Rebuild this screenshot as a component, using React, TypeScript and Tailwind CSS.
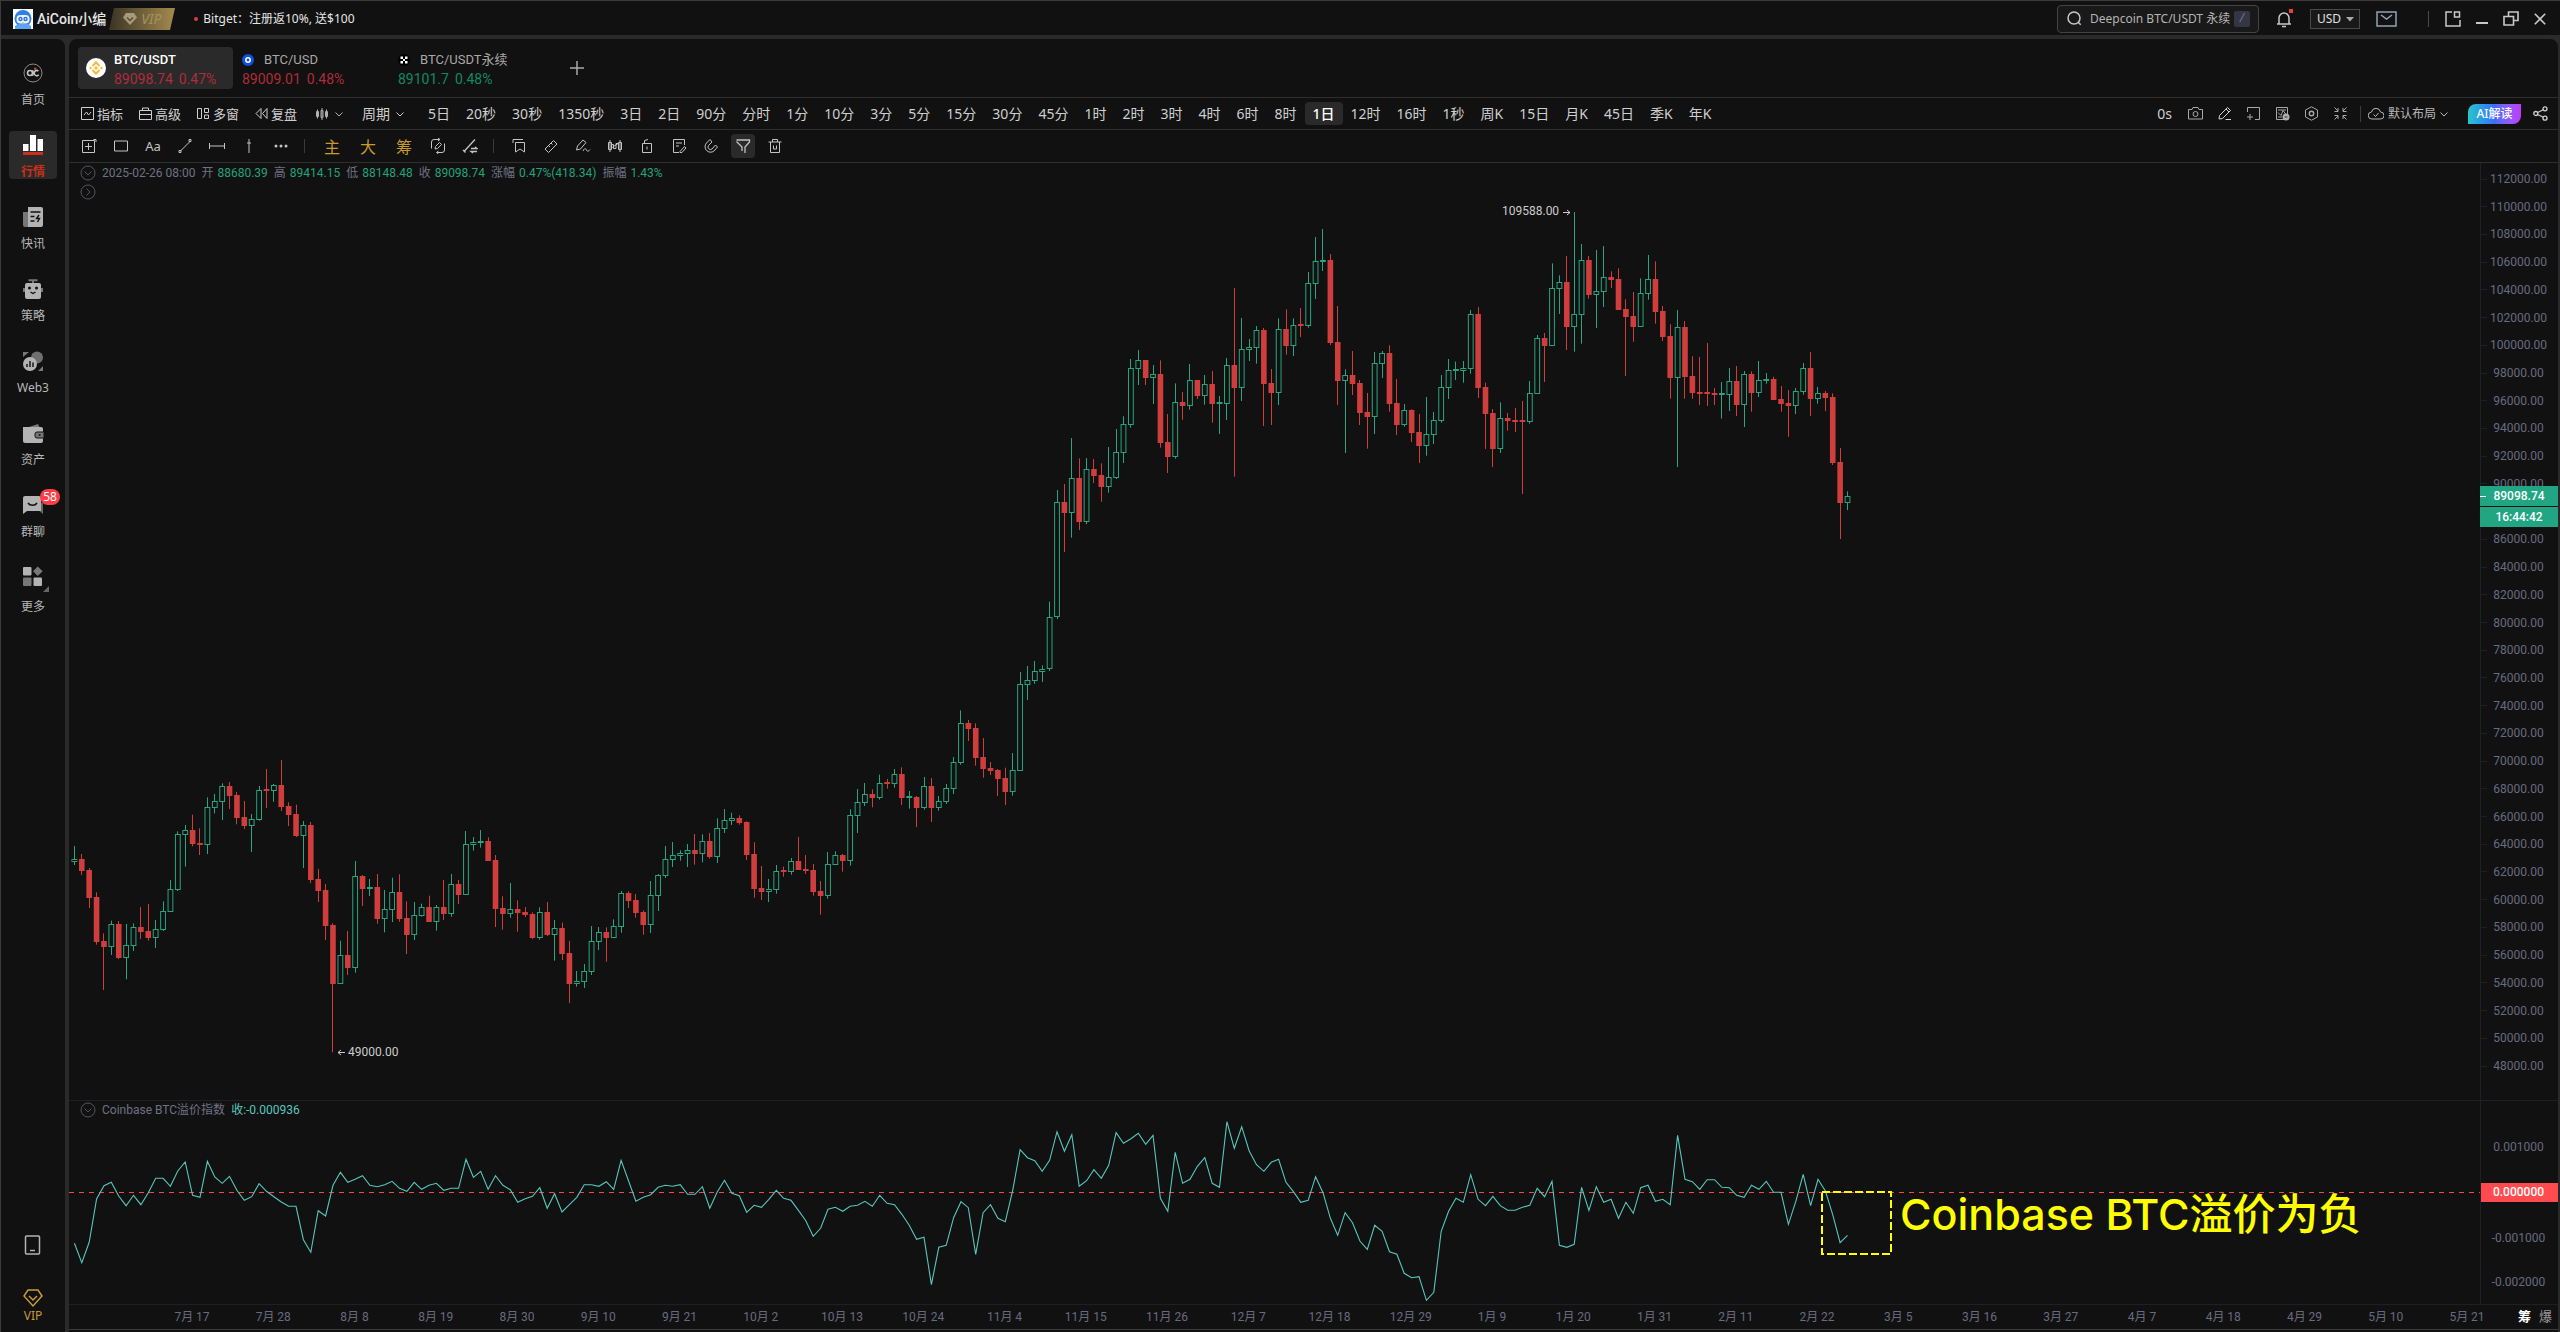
import type { ReactNode } from 'react'

const UI_FONT = "font-['Noto_Sans','Noto_Sans_CJK_SC',sans-serif]"
const NUM_FONT = "font-['Roboto','Noto_Sans_CJK_SC',sans-serif]"

// One bar: [1 up / 0 down, high, body top, body bottom, low].
// Values are y positions in thirds of a pixel, counted from the block's base (in pixels).
type Bar = [number, number, number, number, number]

const BLOCKS: { base: number; bars: Bar[] }[] = [
  {
    base: 567,
    bars: [
      [1, 348, 387, 396, 405], [0, 372, 387, 423, 435], [0, 414, 420, 504, 534], [0, 487, 501, 636, 644],
      [0, 610, 633, 651, 780], [1, 572, 582, 651, 675], [0, 573, 582, 684, 687], [1, 582, 645, 684, 748],
      [1, 580, 591, 648, 663], [0, 531, 591, 606, 627], [0, 522, 603, 624, 632], [1, 570, 597, 624, 654],
      [1, 514, 543, 600, 603], [1, 450, 477, 546, 546], [1, 304, 312, 480, 483], [1, 285, 300, 315, 410],
      [0, 254, 300, 342, 349], [0, 295, 339, 345, 375], [1, 202, 231, 345, 372], [1, 192, 213, 234, 250],
      [1, 160, 168, 216, 270], [0, 156, 168, 198, 237], [0, 186, 195, 264, 283], [0, 213, 261, 288, 297],
      [1, 252, 267, 288, 366], [1, 168, 180, 270, 272], [0, 117, 177, 183, 234], [1, 162, 165, 183, 215],
      [0, 90, 165, 231, 243], [0, 217, 228, 255, 288], [0, 224, 252, 318, 321], [1, 273, 285, 318, 414],
      [0, 276, 285, 450, 459], [0, 417, 447, 483, 516], [0, 462, 480, 588, 630], [0, 580, 585, 762, 967],
      [1, 632, 675, 762, 762], [0, 603, 675, 714, 735], [1, 393, 438, 714, 728], [0, 435, 438, 477, 528],
      [1, 447, 471, 477, 498], [0, 432, 471, 567, 581], [1, 480, 537, 567, 607], [1, 443, 486, 540, 576],
      [0, 433, 486, 567, 575], [0, 514, 564, 615, 672], [1, 516, 555, 615, 630], [1, 521, 531, 558, 560],
      [0, 497, 531, 576, 576], [1, 525, 531, 576, 602], [0, 450, 531, 552, 570], [1, 432, 462, 552, 560],
      [0, 450, 462, 495, 522], [1, 303, 342, 495, 495], [1, 321, 336, 345, 362], [1, 300, 333, 338, 353],
      [0, 322, 333, 393, 393], [0, 375, 390, 537, 591], [0, 499, 534, 552, 599], [1, 459, 537, 552, 563],
      [0, 511, 537, 549, 605], [0, 531, 546, 555, 561], [0, 547, 552, 624, 627], [1, 532, 546, 624, 629],
      [0, 516, 546, 615, 618], [1, 570, 594, 615, 692], [0, 578, 594, 672, 690], [0, 633, 669, 762, 819],
      [1, 723, 753, 762, 770], [1, 702, 723, 756, 774], [1, 588, 633, 726, 735], [1, 591, 606, 636, 660],
      [0, 592, 606, 624, 695], [1, 568, 588, 624, 624], [1, 483, 489, 591, 608], [0, 484, 489, 513, 534],
      [0, 492, 510, 549, 563], [0, 541, 546, 585, 614], [1, 453, 495, 585, 609], [1, 432, 435, 498, 543],
      [1, 348, 387, 438, 444], [1, 336, 375, 390, 411], [1, 361, 369, 378, 392], [1, 342, 360, 372, 411],
      [0, 312, 360, 372, 404], [1, 313, 333, 372, 397], [0, 309, 333, 381, 386], [1, 265, 294, 381, 399],
      [1, 237, 270, 297, 309], [1, 248, 264, 273, 285],
    ],
  },
  {
    base: 507,
    bars: [
      [0, 436, 444, 459, 464], [0, 454, 456, 555, 570], [0, 517, 552, 657, 683], [0, 588, 654, 666, 690],
      [1, 627, 657, 666, 696], [1, 585, 603, 660, 671], [0, 590, 600, 606, 620], [1, 564, 573, 606, 614],
      [0, 501, 573, 600, 600], [0, 555, 597, 603, 612], [0, 582, 600, 666, 677], [0, 633, 663, 678, 734],
      [1, 546, 582, 678, 686], [1, 544, 555, 585, 585], [0, 552, 555, 573, 605], [1, 418, 435, 573, 587],
      [1, 357, 396, 438, 489], [1, 339, 372, 399, 408], [0, 358, 372, 384, 412], [1, 314, 339, 384, 389],
      [0, 327, 336, 342, 356], [1, 297, 312, 342, 353], [0, 292, 312, 384, 405], [1, 363, 378, 384, 416],
      [0, 378, 381, 414, 471], [1, 321, 348, 414, 419], [0, 324, 348, 414, 456], [1, 378, 393, 414, 422],
      [1, 342, 354, 396, 402], [1, 261, 276, 357, 372], [1, 121, 159, 279, 284], [0, 150, 159, 177, 213],
      [0, 160, 174, 264, 287], [0, 204, 261, 297, 323], [0, 276, 294, 303, 315], [0, 297, 300, 327, 378],
      [0, 293, 324, 366, 405], [1, 249, 300, 366, 377], [1, 6, 42, 303, 303], [1, -12, 30, 45, 90],
      [1, -27, 3, 33, 41], [1, -14, -3, 6, 36], [1, -205, -158, -4, 3],
    ],
  },
  {
    base: 17,
    bars: [
      [1, 930, 966, 1312, 1317], [0, 912, 966, 999, 1116], [1, 774, 894, 999, 1073], [0, 835, 894, 1026, 1050],
      [1, 834, 867, 1026, 1032], [0, 837, 867, 888, 909], [0, 850, 885, 921, 965], [1, 801, 891, 921, 938],
      [1, 747, 816, 894, 897], [1, 709, 732, 819, 849], [1, 537, 564, 735, 743], [1, 510, 540, 567, 615],
      [0, 540, 540, 594, 615], [1, 555, 582, 594, 672], [0, 541, 582, 789, 803], [0, 702, 786, 831, 879],
      [1, 610, 666, 831, 836], [0, 636, 666, 678, 719], [1, 552, 600, 678, 689], [0, 600, 600, 648, 657],
      [1, 585, 612, 648, 674], [0, 573, 612, 672, 728], [1, 648, 666, 672, 762], [1, 534, 555, 672, 720],
      [0, 324, 555, 624, 890], [1, 414, 507, 624, 663], [1, 477, 501, 510, 543], [1, 438, 450, 504, 551],
      [0, 444, 450, 612, 738], [0, 567, 609, 639, 735], [1, 415, 447, 639, 675], [0, 388, 447, 498, 524],
      [1, 415, 435, 498, 528], [0, 384, 432, 438, 471], [1, 276, 309, 438, 443], [1, 171, 243, 312, 357],
      [1, 147, 240, 246, 273], [0, 222, 240, 489, 495], [0, 378, 486, 603, 675], [1, 568, 585, 603, 819],
      [0, 513, 585, 612, 645], [0, 600, 609, 699, 735], [0, 639, 696, 711, 806], [1, 516, 549, 711, 762],
      [1, 513, 519, 552, 594], [0, 496, 519, 672, 695], [0, 597, 669, 735, 765], [1, 672, 690, 735, 740],
      [0, 688, 690, 759, 786], [0, 702, 756, 798, 849], [1, 651, 762, 798, 827], [1, 696, 720, 765, 792],
      [1, 585, 621, 723, 728], [1, 537, 570, 624, 657], [1, 545, 567, 573, 600], [1, 543, 564, 573, 608],
      [1, 390, 402, 567, 581], [0, 381, 402, 624, 654], [0, 608, 621, 702, 807], [0, 687, 699, 807, 861],
      [1, 667, 714, 807, 819], [0, 699, 714, 723, 752], [0, 684, 720, 726, 756], [0, 663, 720, 726, 942],
      [1, 603, 639, 726, 731], [1, 465, 474, 642, 642], [0, 459, 474, 498, 606], [1, 250, 324, 498, 498],
      [1, 286, 306, 327, 402], [0, 228, 306, 441, 510], [1, 96, 402, 441, 515], [1, 192, 240, 405, 491],
      [0, 228, 240, 345, 356], [1, 210, 333, 345, 444], [1, 198, 291, 336, 381], [0, 274, 291, 300, 324],
      [0, 265, 297, 390, 390], [0, 358, 387, 411, 588], [0, 336, 408, 441, 485], [1, 295, 339, 441, 441],
      [1, 225, 297, 342, 359], [0, 244, 297, 396, 431], [0, 378, 393, 471, 483], [0, 433, 468, 594, 656],
      [1, 390, 441, 594, 861], [0, 423, 441, 591, 656], [0, 529, 588, 639, 656], [0, 531, 636, 642, 675],
      [0, 489, 636, 642, 678], [0, 624, 639, 645, 675], [1, 606, 639, 645, 716], [1, 564, 603, 645, 693],
      [0, 558, 603, 675, 708], [1, 573, 582, 675, 741], [0, 574, 582, 639, 695], [1, 543, 600, 639, 651],
      [1, 579, 597, 603, 611], [0, 590, 597, 660, 660], [0, 618, 657, 672, 695], [0, 630, 669, 678, 770],
      [1, 624, 633, 678, 702], [1, 549, 564, 636, 644], [0, 516, 564, 657, 708], [1, 621, 639, 657, 671],
      [0, 633, 639, 654, 693], [0, 640, 651, 849, 855], [0, 804, 846, 969, 1077], [1, 934, 948, 969, 990],
    ],
  },
]

// Premium index, in thirds of a pixel as well
const PREMIUM = [
  487, 545, 484, 354, 314, 304, 345, 374, 343, 371, 335, 292, 292, 316, 270, 243, 343, 349, 241, 288, 307, 286, 328,
  358, 347, 308, 331, 347, 363, 376, 376, 476, 514, 389, 405, 313, 274, 304, 295, 284, 313, 317, 311, 301, 322, 331,
  304, 325, 313, 307, 328, 322, 322, 235, 289, 271, 325, 284, 313, 326, 364, 353, 346, 320, 382, 338, 393, 371, 349,
  311, 311, 316, 302, 325, 238, 299, 361, 349, 341, 319, 313, 316, 311, 340, 340, 317, 382, 333, 298, 337, 344, 394,
  373, 379, 355, 328, 352, 358, 388, 419, 466, 442, 385, 379, 391, 376, 373, 361, 376, 343, 367, 371, 400, 433, 475,
  469, 611, 499, 493, 410, 362, 380, 520, 395, 371, 412, 422, 328, 206, 230, 239, 271, 238, 152, 211, 161, 316, 299,
  266, 292, 253, 155, 187, 173, 157, 190, 163, 352, 391, 214, 307, 295, 256, 230, 307, 319, 122, 202, 137, 209, 251,
  271, 244, 235, 304, 332, 364, 358, 287, 335, 412, 463, 395, 425, 480, 505, 433, 451, 512, 520, 577, 590, 587, 658,
  634, 451, 391, 352, 364, 281, 355, 374, 346, 374, 388, 388, 379, 373, 322, 347, 301, 493, 499, 490, 319, 388, 317,
  364, 355, 412, 364, 397, 320, 313, 361, 355, 371, 163, 295, 302, 325, 296, 296, 319, 320, 343, 349, 313, 325, 301,
  334, 334, 430, 361, 280, 374, 295, 330, 401, 485, 463,
]

const BAR_STEP = 7.388
const barX = (i: number) => 5.4 + i * BAR_STEP

const CANDLES = BLOCKS.flatMap(b => b.bars.map(bar => ({ up: bar[0] === 1, y: bar.slice(1).map(v => b.base + v / 3) })))

const PERIODS = [
  '5日', '20秒', '30秒', '1350秒', '3日', '2日', '90分', '分时', '1分', '10分', '3分', '5分', '15分', '30分', '45分', '1时',
  '2时', '3时', '4时', '6时', '8时', '1日', '12时', '16时', '1秒', '周K', '15日', '月K', '45日', '季K', '年K',
]

const DATES = [
  '7月 17', '7月 28', '8月 8', '8月 19', '8月 30', '9月 10', '9月 21', '10月 2', '10月 13', '10月 24', '11月 4', '11月 15',
  '11月 26', '12月 7', '12月 18', '12月 29', '1月 9', '1月 20', '1月 31', '2月 11', '2月 22', '3月 5', '3月 16', '3月 27',
  '4月 7', '4月 18', '4月 29', '5月 10', '5月 21',
]

const PRICES = Array.from({ length: 33 }, (_, i) => `${112000 - i * 2000}.00`)

function Ico({ children, size = 16, className = '' }: { children: ReactNode; size?: number; className?: string }) {
  return (
    <svg
      width={size}
      height={size}
      viewBox={`0 0 ${size} ${size}`}
      fill="none"
      stroke="currentColor"
      className={`shrink-0 ${className}`}
      aria-hidden="true"
    >
      {children}
    </svg>
  )
}

function Chevron() {
  return (
    <Ico size={8}>
      <path d="M0.5 2.5 4 6l3.5-3.5" />
    </Ico>
  )
}

function TitleBar() {
  return (
    <header className="flex h-[34px] items-center pt-px pr-[14px] pl-3 text-[#e6e6e6]">
      <svg width="20" height="20" viewBox="0 0 20 20" className="shrink-0" aria-hidden="true">
        <path d="M0 0h20v20H0z" fill="#fff" />
        <circle cx="10" cy="9.5" r="8.5" fill="#2f7fe6" />
        <path d="M2 17c3-3 13-3 16 0v3H2z" fill="#5aa6f5" />
        <rect x="3.5" y="6" width="13" height="8.5" rx="4" fill="#e9f4ff" />
        <circle cx="7.5" cy="10" r="2.2" fill="#2f6fd6" />
        <circle cx="12.5" cy="10" r="2.2" fill="#2f6fd6" />
        <circle cx="7.5" cy="10" r="0.8" fill="#fff" />
        <circle cx="12.5" cy="10" r="0.8" fill="#fff" />
        <path d="M9 13h2l-1 1.6z" fill="#f2b13c" />
      </svg>
      <span className={`ml-1 text-sm leading-5 font-medium ${NUM_FONT}`}>AiCoin小编</span>
      <div className="relative ml-[3px] flex h-[22px] w-[66px] items-center justify-center">
        <svg width="66" height="22" className="absolute inset-0" aria-hidden="true">
          <defs>
            <linearGradient id="vip">
              <stop offset="0" stopColor="#3a3425" />
              <stop offset="1" stopColor="#a48a4e" />
            </linearGradient>
          </defs>
          <path d="M5 0h61l-5 22H0z" fill="url(#vip)" />
        </svg>
        <svg width="14" height="12" viewBox="0 0 14 12" className="relative" aria-hidden="true">
          <path d="M3 0h8l3 4.5L7 12 0 4.5z" fill="#a89a78" />
          <path d="M4 4.5 7 7.5l3-3" fill="none" stroke="#5a4d30" strokeWidth="1.4" />
        </svg>
        <span className="relative ml-1 text-sm leading-4 text-[#a3925f] italic">VIP</span>
      </div>
      <span className="ml-[19px] size-1 rounded-full bg-[#e5393f]" />
      <a href="#bitget" className="ml-[5px] text-xs leading-5">
        Bitget：注册返10%, 送$100
      </a>

      <label className="ml-auto flex h-7 w-[202px] items-center rounded border border-[#434343] bg-[#191919] pr-2 pl-[9px] text-[#c8c8c8]">
        <Ico size={15}>
          <circle cx="7" cy="7" r="6" strokeWidth="1.5" />
          <path d="m11.2 11.2 2.5 2.5" strokeWidth="1.5" />
        </Ico>
        <input
          aria-label="搜索"
          defaultValue="Deepcoin BTC/USDT 永续"
          className="ml-2 w-0 min-w-0 flex-1 bg-transparent text-xs leading-5 text-[#b4b4b4] outline-none"
        />
        <kbd className="flex size-4 items-center justify-center rounded-xs bg-[#343645] text-xs leading-4 text-[#777a8c]">/</kbd>
      </label>
      <button type="button" aria-label="通知" className="relative ml-4 text-[#c8c8c8]">
        <Ico size={18}>
          <path d="M2 14h14M4 14V8a5 5 0 0 1 10 0v6M7 16.5h4" strokeWidth="1.5" />
        </Ico>
        <span className="absolute -top-px right-0 size-1 bg-[#ee3b44]" />
      </button>
      <div className="relative ml-[17px] flex">
        <select
          aria-label="计价货币"
          className="h-5 w-[50px] appearance-none border border-[#4a4a4a] bg-[#191919] pl-[6px] text-xs leading-4 text-[#e0e0e0]"
        >
          <option>USD</option>
        </select>
        <svg width="8" height="5" className="pointer-events-none absolute top-2 right-[6px]" aria-hidden="true">
          <path d="M0 0h8L4 4.5z" fill="#aaa" />
        </svg>
      </div>
      <button type="button" aria-label="邮件" className="ml-4 text-[#93a0b5]">
        <svg width="21" height="16" viewBox="0 0 21 16" fill="none" stroke="currentColor" strokeWidth="1.5">
          <path d="M1 1h19v14H1zM5 4l5.5 4L16 4" />
        </svg>
      </button>
      <span className="ml-[31px] h-4 w-px bg-[#4a4a4a]" />
      <div className="ml-4 flex items-center gap-[15px] text-[#c8c8c8]">
        <button type="button" aria-label="小窗">
          <Ico>
            <path d="M7 1H1v14h14V9" strokeWidth="1.5" />
            <path d="M9.5 1h5v5h-5z" strokeWidth="1.5" />
          </Ico>
        </button>
        <button type="button" aria-label="最小化">
          <svg width="12" height="10">
            <path d="M0 8h12v2H0z" fill="currentColor" />
          </svg>
        </button>
        <button type="button" aria-label="还原">
          <Ico>
            <path d="M5.5 5V1H15v8.5h-4" strokeWidth="1.6" />
            <path d="M1 5.5h9.5V14H1z" strokeWidth="1.6" />
          </Ico>
        </button>
        <button type="button" aria-label="关闭">
          <Ico size={12}>
            <path d="m.8.8 10.4 10.4M11.2.8.8 11.2" strokeWidth="1.6" />
          </Ico>
        </button>
      </div>
    </header>
  )
}

const NAV: { label: string; icon: ReactNode; active?: boolean; badge?: string; more?: boolean }[] = [
  {
    label: '首页',
    icon: (
      <>
        <circle cx="10" cy="10" r="9" stroke="#8c8c8c" />
        <circle cx="7" cy="10" r="2.5" stroke="#c4c4c4" strokeWidth="1.6" />
        <path d="M9.7 7.3v5.5M15.4 8a2.6 2.6 0 1 0 .3 3.800" stroke="#c4c4c4" strokeWidth="1.6" />
        <circle cx="12.2" cy="5.8" r="1.2" fill="#e0452b" />
      </>
    ),
  },
  {
    label: '行情',
    active: true,
    icon: (
      <>
        <path d="M0 9h5.500v7H0zM7 0h6v16H7zM14.500 4H20v12h-5.500z" fill="#fff" />
        <path d="M0 17h20v3H0z" fill="#c8301c" />
      </>
    ),
  },
  {
    label: '快讯',
    icon: (
      <>
        <path d="M0 5h5v15H2a2 2 0 0 1-2-2z" fill="#777" />
        <path d="M5 0h13a2 2 0 0 1 2 2v16a2 2 0 0 1-2 2H5z" fill="#b3b3b3" />
        <path d="M7.500 5h10M7.500 9.500h4M7.500 14h4" stroke="#111" strokeWidth="1.6" />
        <path d="m16 8-2.500 3.500h3L14.500 15" stroke="#111" strokeWidth="1.4" />
      </>
    ),
  },
  {
    label: '策略',
    icon: (
      <>
        <path d="M5.500 1.200h9M10 1v3" stroke="#777" strokeWidth="2" />
        <path d="M0 9h20v4H0z" fill="#777" />
        <rect x="2" y="4" width="16" height="16" rx="2" fill="#b3b3b3" />
        <circle cx="6.500" cy="9" r="1.500" fill="#111" />
        <circle cx="13.500" cy="9" r="1.500" fill="#111" />
        <path d="m7.500 13 2.500 1.500 2.500-1.500" stroke="#111" strokeWidth="1.400" />
      </>
    ),
  },
  {
    label: 'Web3',
    icon: (
      <>
        <circle cx="14" cy="6.500" r="6" fill="#6f6f6f" />
        <circle cx="7" cy="13" r="7" fill="#b3b3b3" />
        <path d="M4 16v-3M7 16v-6M10 16v-4.500" stroke="#222" strokeWidth="1.600" />
        <path d="M0 1h6L0 6zM20 15v5h-5z" fill="#777" />
      </>
    ),
  },
  {
    label: '资产',
    icon: (
      <>
        <path d="m3 5 12-4 2 4z" fill="#777" />
        <path d="M0 4h18a2 2 0 0 1 2 2v12a2 2 0 0 1-2 2H2a2 2 0 0 1-2-2z" fill="#b3b3b3" />
        <path d="M20.500 9H14a2 2 0 0 0-2 2v2a2 2 0 0 0 2 2h6.500" fill="#777" stroke="#111" />
        <path d="M15.500 12h2" stroke="#111" strokeWidth="1.500" />
      </>
    ),
  },
  {
    label: '群聊',
    badge: '58',
    icon: (
      <>
        <path d="M16 8h4v11l-3.500-3H8z" fill="#666" />
        <path d="M2 1h14a2 2 0 0 1 2 2v13H4l-4 3V3a2 2 0 0 1 2-2z" fill="#b3b3b3" />
        <path d="M5 8c2 3 7 3 9 0" stroke="#111" strokeWidth="1.600" />
      </>
    ),
  },
  {
    label: '更多',
    more: true,
    icon: (
      <>
        <rect y="0" width="8.500" height="8.500" rx="1" fill="#b3b3b3" />
        <path d="m14.700-.5 5 4.700-5 4.700-4.700-4.700z" fill="#777" />
        <rect y="10.500" width="8.500" height="8.500" rx="1" fill="#777" />
        <rect x="10.500" y="10.500" width="8.500" height="8.500" rx="1" fill="#b3b3b3" />
      </>
    ),
  },
]

function Sidebar() {
  return (
    <nav className="flex w-16 shrink-0 flex-col items-center rounded-tr-lg bg-[#111] pt-5 pb-2">
      <div className="flex flex-col gap-6">
        {NAV.map(n => (
          <a
            key={n.label}
            href={`#${n.label}`}
            className={`relative flex size-12 flex-col items-center rounded pt-1 text-xs leading-4 ${
              n.active ? 'bg-[#2a2a2a] font-bold text-[#c8301c]' : 'text-[#b8b8b8]'
            }`}
          >
            <Ico size={20} className="overflow-visible stroke-none">
              {n.icon}
            </Ico>
            <span className={n.more ? 'mt-3' : 'mt-[9px]'}>{n.label}</span>
            {n.badge && (
              <span className="absolute -top-[2px] left-[31px] flex h-4 w-5 items-center justify-center rounded-full bg-[#ff3d47] text-xs text-white">
                {n.badge}
              </span>
            )}
            {n.more && (
              <svg width="6" height="6" className="absolute top-[23px] left-[34px]" aria-hidden="true">
                <path d="M6 0v6H0z" fill="#666" />
              </svg>
            )}
          </a>
        ))}
      </div>
      <button type="button" aria-label="手机" className="mt-auto mb-[33px] text-[#b3b3b3]">
        <Ico size={20}>
          <rect x="2.500" y="1" width="14" height="18" rx="1" strokeWidth="1.500" />
          <path d="M7 15.500h5" strokeWidth="1.500" />
        </Ico>
      </button>
      <a href="#vip" className="flex flex-col items-center text-xs leading-4 text-[#c99a3a]">
        <Ico size={20}>
          <path d="M5 2h10l4 6-9 10L1 8z" strokeWidth="1.500" />
          <path d="m6 8 4 4 4-4" strokeWidth="1.500" />
        </Ico>
        VIP
      </a>
    </nav>
  )
}

function SymbolTabs() {
  return (
    <div className={`flex h-[58px] items-center pl-[9px] text-sm leading-4 ${NUM_FONT}`}>
      <button type="button" className="flex h-[42px] w-[155px] items-center rounded bg-[#2a2a2a] pl-2 text-left">
        <svg width="20" height="20" viewBox="0 0 20 20" aria-hidden="true">
          <circle cx="10" cy="10" r="10" fill="#fff" />
          <path d="M6.500 8 10 4.500 13.500 8M6.500 12l3.500 3.500 3.500-3.500" fill="none" stroke="#f3ba2f" strokeWidth="2" />
          <path d="m10 8 2 2-2 2-2-2zM4.500 8.500 6 10l-1.500 1.500L3 10zM15.500 8.500 17 10l-1.500 1.500L14 10z" fill="#f3ba2f" />
        </svg>
        <span className="ml-2 flex flex-col gap-[3px] pt-[2px]">
          <span className="text-[13px] font-medium text-white">BTC/USDT</span>
          <span className="flex gap-[6px] text-[#b02c3a]">
            <span>89098.74</span>
            <span>0.47%</span>
          </span>
        </span>
      </button>
      <button type="button" className="flex h-[42px] w-[157px] flex-col justify-center gap-[3px] pt-[2px] pl-[9px] text-left">
        <span className="flex items-center gap-[10px] text-[13px] text-[#a8a8a8]">
          <svg width="12" height="12" viewBox="0 0 12 12" aria-hidden="true">
            <circle cx="6" cy="6" r="6" fill="#0d51e0" />
            <circle cx="6" cy="6" r="2.200" fill="none" stroke="#fff" strokeWidth="1.600" />
          </svg>
          BTC/USD
        </span>
        <span className="flex gap-[6px] text-[#b02c3a]">
          <span>89009.01</span>
          <span>0.48%</span>
        </span>
      </button>
      <button type="button" className="flex h-[42px] w-[160px] flex-col justify-center gap-[3px] pt-[2px] pl-2 text-left">
        <span className="flex items-center gap-[10px] text-[13px] text-[#a8a8a8]">
          <svg width="12" height="12" viewBox="0 0 12 12" aria-hidden="true">
            <circle cx="6" cy="6" r="6" fill="#000" />
            <path d="M2.500 2.500H5V5H2.500zM7 2.500h2.500V5H7zM5 5h2v2H5zM2.500 7H5v2.500H2.500zM7 7h2.500v2.500H7z" fill="#fff" />
          </svg>
          BTC/USDT永续
        </span>
        <span className="flex gap-[6px] text-[#0e8a63]">
          <span>89101.7</span>
          <span>0.48%</span>
        </span>
      </button>
      <button type="button" aria-label="添加" className="ml-5 text-[#aaa]">
        <Ico size={14}>
          <path d="M7 0v14M0 7h14" strokeWidth="1.500" />
        </Ico>
      </button>
    </div>
  )
}

function ToolItem({ label, children }: { label: string; children: ReactNode }) {
  return (
    <button type="button" className="flex items-center gap-[3px] text-[13px] leading-5">
      <Ico size={13}>{children}</Ico>
      {label}
    </button>
  )
}

function PeriodBar() {
  return (
    <div className="flex h-8 items-center border-t border-[#2e2e2e] pr-[10px] pl-3 text-[#cfcfcf]">
      <div className="flex items-center gap-4">
        <ToolItem label="指标">
          <path d="M.5.5h12v12H.5zM3 8l2.500-3L7.500 8 10 5" />
        </ToolItem>
        <ToolItem label="高级">
          <path d="M.5 3.500h12v9H.5zM3.500 3.500v-2.500h6v2.500M.5 7.500h12" />
        </ToolItem>
        <ToolItem label="多窗">
          <path d="M.5 1.500h4v10h-4zM7.500 1.500h4v4h-4zM7.500 8h4v3.500h-4z" />
        </ToolItem>
        <ToolItem label="复盘">
          <path d="M6 1.500 1 6.500l5 5zM12 1.500 7.500 6.500l4.500 5z" />
        </ToolItem>
      </div>
      <button type="button" aria-label="图表类型" className="ml-[18px] flex items-center gap-[6px] text-[#b0b0b0]">
        <Ico size={14}>
          <path d="M2.500 2.500v9M7 1v12M11.500 2.500v9" />
          <path d="M1.500 4.500h2v5h-2zM6 3.500h2v7H6zM10.500 4.500h2v5h-2z" />
        </Ico>
        <Chevron />
      </button>
      <button type="button" className="ml-[19px] flex items-center gap-[6px] text-sm leading-5">
        周期
        <Chevron />
      </button>
      <div className="ml-4 flex text-sm leading-5">
        {PERIODS.map(p => (
          <button
            key={p}
            type="button"
            className={`h-[23px] rounded px-2 whitespace-nowrap ${p === '1日' ? 'bg-[#2a2a2a] font-medium text-white' : ''}`}
          >
            {p}
          </button>
        ))}
      </div>

      <div className="ml-auto flex items-center gap-[14px] text-[#a8a8a8]">
        <span className="mr-[2px] text-sm leading-5 text-[#cfcfcf]">0s</span>
        <button type="button" aria-label="截图">
          <Ico size={15}>
            <path d="M.5 3.500H4L5 1.500h5l1 2h3.500v9.500H.5z" />
            <circle cx="7.500" cy="8" r="2.500" />
          </Ico>
        </button>
        <button type="button" aria-label="画线" className="text-[#d4d4d4]">
          <Ico size={15}>
            <path d="m2 13 .5-3.500 8-8 3 3-8 8zM9 3l3 3M8.500 13.500H14" />
          </Ico>
        </button>
        <button type="button" aria-label="新增窗口">
          <Ico size={15}>
            <path d="M1.500 6V1.500h12v12H9M4 8v6M1 11h6" />
          </Ico>
        </button>
        <button type="button" aria-label="统计">
          <Ico size={15}>
            <path d="M1.500 1.500h11v12h-11zM3 4h8M3 6.500l3 3 2-5 3 4M3 11h4" />
            <circle cx="11" cy="11" r="3.500" fill="#b0b0b0" stroke="none" />
            <path d="M9.500 11h3" stroke="#333" />
          </Ico>
        </button>
        <button type="button" aria-label="设置">
          <Ico size={15}>
            <path d="m7.500.8 6 3.200v7l-6 3.200-6-3.200V4z" />
            <circle cx="7.500" cy="7.500" r="2.200" strokeWidth="1.400" />
          </Ico>
        </button>
        <button type="button" aria-label="收起">
          <Ico size={15}>
            <path d="M1.500 1.500 5 5M5 2v3.500H1.500M13.500 1.500 10 5M10 2v3.500h3.500M1.500 13.500 5 10M5 13V9.500H1.500M13.500 13.500 10 10M10 13V9.500h3.500" />
          </Ico>
        </button>
      </div>
      <span className="ml-3 h-4 w-px bg-[#3c3c3c]" />
      <button type="button" className="ml-[7px] flex items-center gap-1 text-xs leading-5 text-[#b8b8b8]">
        <Ico size={16}>
          <path d="M4 13a3.500 3.500 0 0 1-.5-7A4.600 4.600 0 0 1 12.500 6a3.500 3.500 0 0 1 0 7zM5.500 8.500l2 2 3-3.500" />
        </Ico>
        默认布局
        <Chevron />
      </button>
      <button
        type="button"
        className="ml-5 h-5 w-[53px] rounded-tl-lg rounded-br-lg bg-linear-to-r from-[#2cc4c8] via-[#3a6cff] to-[#c03af5] text-xs leading-5 font-medium text-white"
      >
        AI解读
      </button>
      <button type="button" aria-label="分享" className="ml-3">
        <Ico size={15}>
          <circle cx="2.800" cy="7.500" r="2" strokeWidth="1.300" />
          <circle cx="12" cy="2.800" r="2" strokeWidth="1.300" />
          <circle cx="12" cy="12.200" r="2" strokeWidth="1.300" />
          <path d="m4.600 6.500 5.600-2.800M4.600 8.500l5.600 2.800" strokeWidth="1.200" />
        </Ico>
      </button>
    </div>
  )
}

const SHAPE_TOOLS: { name: string; icon: ReactNode }[] = [
  { name: '十字', icon: <path d="M1.500 2.500h12v12h-12zM7.500 5v7M4 8.500h7M12.500 1.500h2.500v2.500" /> },
  { name: '矩形', icon: <path d="M1.500 3h13v10h-13z" /> },
  { name: '文字', icon: null },
  { name: '线段', icon: <path d="M3.500 13 13 3.500M2 12.500h2v2H2zM12 1.500h2v2h-2z" /> },
  { name: '水平线', icon: <path d="M.5 5v6M15.500 5v6M1 8h14" /> },
  { name: '垂直线', icon: <path d="M8 1v14M6 5h4" /> },
  {
    name: '更多工具',
    icon: (
      <g fill="currentColor" stroke="none">
        <circle cx="3" cy="8" r="1.500" />
        <circle cx="8" cy="8" r="1.500" />
        <circle cx="13" cy="8" r="1.500" />
      </g>
    ),
  },
]

const EDIT_TOOLS: { name: string; icon: ReactNode; active?: boolean }[] = [
  { name: '书签', icon: <path d="M2 5V1.500h10M4.500 4.500h9v9.500L9 11l-4.500 3z" /> },
  { name: '测量', icon: <path d="m2 11 8.500-8.500 3.500 3.500L5.500 14.500zM8 5l1.500 1.500M5.500 7.500 7 9" /> },
  { name: '画笔', icon: <path d="m1.500 12 1-4L8 2l3 2.500-5.500 6.500zM8 13c1.500-3 2.500-3 3.500-1s2 1.500 3.500-.5" /> },
  { name: 'K线', icon: <path d="M3 2v12M13 2v12M1.500 4.500h3v7h-3zM11.500 4.500h3v7h-3zM5 6.500h1.500v4H9v-5h2M5 9.500l6-4" /> },
  { name: '锁定', icon: <path d="M3.500 5.500h9v9h-9zM5.500 5.500V2.500L9 1.500M8 8.500v3" /> },
  { name: '笔记', icon: <path d="M8 14.500H2.500v-13h11V7M5 5h6M5 8h3M9 13.500l4.500-5 1.500 1.500-4 4.500H9z" /> },
  { name: '磁铁', icon: <path d="M7 1.500 3.500 5a5.500 5.500 0 0 0 7.500 8l3.500-4-2-2-3.500 4a2.500 2.500 0 0 1-3.500-3.500L9 4z" /> },
  { name: '筛选', active: true, icon: <path d="M1.500 2h13v2L10 9v6M1.500 3.500 7 9v4" strokeWidth="1.300" /> },
  { name: '删除', icon: <path d="M1.500 4h13M5.500 4V1.500h5V4M3.500 4v10.500h9V4M6.500 7.500v3.500M9.500 7.500v3.500M6.500 11h3" /> },
]

function DrawBar() {
  return (
    <div className="flex h-[33px] items-center border-t border-[#2e2e2e] pl-1 text-[#c4c4c4]">
      {SHAPE_TOOLS.map(t => (
        <button key={t.name} type="button" aria-label={t.name} className="flex h-6 w-8 items-center justify-center">
          {t.icon ? <Ico>{t.icon}</Ico> : <span className="text-[13px] leading-5">Aa</span>}
        </button>
      ))}
      <span className="mr-[9px] ml-[7px] h-[14px] w-px bg-[#3a3a3a]" />
      {['主', '大', '筹'].map(t => (
        <button key={t} type="button" className="h-6 w-9 pt-px text-base leading-6 text-[#c99a2e]">
          {t}
        </button>
      ))}
      <button type="button" aria-label="切换画笔" className="flex h-6 w-8 items-center justify-center">
        <Ico>
          <path d="M1.500 10.500V4a2.500 2.500 0 0 1 2.500-2.500h5M14.500 5.500V12a2.500 2.500 0 0 1-2.500 2.500H7M8 0l2 1.500L8 3M8.500 13l-2 1.500 2 1.500M5 11l.5-2.500L9.500 4.500l2 2-4 4z" />
        </Ico>
      </button>
      <button type="button" aria-label="线型" className="flex h-6 w-8 items-center justify-center">
        <Ico>
          <path d="M2 13.500 13 1.500M1 12l2.500 2.500M9 10.500h6l-2-1.500M15 13.500H9l2 1.500" strokeWidth="1.300" />
        </Ico>
      </button>
      <span className="mr-[9px] ml-[7px] h-[14px] w-px bg-[#3a3a3a]" />
      {EDIT_TOOLS.map(t => (
        <button key={t.name} type="button" aria-label={t.name} className="flex h-6 w-8 items-center justify-center">
          <span className={`flex size-6 items-center justify-center rounded ${t.active ? 'bg-[#2a2a2a]' : ''}`}>
            <Ico size={16}>{t.icon}</Ico>
          </span>
        </button>
      ))}
    </div>
  )
}

function CircleButton({ label, right }: { label: string; right?: boolean }) {
  return (
    <button type="button" aria-label={label} className="text-[#55565c]">
      <Ico size={16}>
        <circle cx="8" cy="8" r="7" />
        {right ? <path d="m6.500 4.500 3.500 3.500-3.500 3.500" /> : <path d="m4.500 6.500 3.500 3.500 3.500-3.500" />}
      </Ico>
    </button>
  )
}

function Quote({ label, value }: { label: string; value: string }) {
  return (
    <span className="flex gap-1">
      {label} <span className="text-[#23a27b]">{value}</span>
    </span>
  )
}

function PricePane() {
  return (
    <div className="relative flex flex-1">
      <svg width="100%" height="937" className="block min-w-0 flex-1" role="img" aria-label="BTC/USDT 日线">
        {CANDLES.map(({ up, y: [high, top, bottom, low] }, i) => {
          const cx = barX(i)
          const color = up ? '#27a580' : '#cf3d3d'
          const wick = Math.floor(cx)
          return (
            <g key={i}>
              <rect x={wick} y={high} width="1" height={Math.max(low - high, 1)} fill={color} />
              {up ? (
                <rect
                  x={cx - 2.4}
                  y={Math.round(top) + 0.5}
                  width="4.800"
                  height={Math.max(Math.round(bottom) - Math.round(top) - 1, 1)}
                  fill="#111"
                  stroke={color}
                />
              ) : (
                <rect x={cx - 2.8} y={Math.round(top)} width="5.600" height={Math.round(bottom) - Math.round(top)} fill={color} />
              )}
            </g>
          )
        })}
        <g className="font-['Roboto',sans-serif] text-xs" fill="#ccc">
          <text x="1433" y="52">109588.00</text>
          <path d="M1494 49.500h7m-3-2.500 3 2.500-3 2.500" fill="none" stroke="#ccc" />
          <text x="279" y="893">49000.00</text>
          <path d="M276 889.500h-7m3-2.500-3 2.500 3 2.500" fill="none" stroke="#ccc" />
        </g>
      </svg>

      <div className="flex w-[78px] shrink-0 flex-col justify-between border-l border-[#1f1f26] pt-2 pb-[26px] text-xs leading-4 text-[#686b80]">
        {PRICES.map(p => (
          <div key={p} className="flex items-center">
            <span className="h-px w-[6px] bg-[#1f1f26]" />
            <span className="flex-1 pr-2 text-center">{p}</span>
          </div>
        ))}
      </div>

      {/* Quote line over the plot */}
      <div className="absolute top-[2px] left-[11px] flex flex-col gap-[3px] text-xs leading-4 text-[#6f7184]">
        <div className="flex items-center gap-[6px]">
          <CircleButton label="收起指标" />
          <div className="flex gap-[6px]">
            <span>2025-02-26 08:00</span>
            <Quote label="开" value="88680.39" />
            <Quote label="高" value="89414.15" />
            <Quote label="低" value="88148.48" />
            <Quote label="收" value="89098.74" />
            <Quote label="涨幅" value="0.47%(418.34)" />
            <Quote label="振幅" value="1.43%" />
          </div>
        </div>
        <div className="flex">
          <CircleButton label="展开" right />
        </div>
      </div>

      {/* Last price and countdown */}
      <div className="absolute top-[323px] right-0 flex w-[78px] flex-col gap-px text-center text-xs leading-5 font-medium text-white">
        <span className="relative bg-[#22a583]">
          <span className="absolute top-[10px] left-0 h-px w-[6px] bg-white" />
          89098.74
        </span>
        <span className="bg-[#22a583]">16:44:42</span>
      </div>
    </div>
  )
}

function PremiumPane() {
  const points = PREMIUM.map((v, i) => `${barX(i).toFixed(1)},${(v / 3 - 20).toFixed(1)}`).join(' ')
  return (
    <div className="relative flex border-t border-[#1f1f26]">
      <svg width="100%" height="203" className="block min-w-0 flex-1" role="img" aria-label="Coinbase BTC溢价指数">
        <line x1="0" x2="100%" y1="91.500" y2="91.500" stroke="#f04a4a" strokeDasharray="5 5" />
        <polyline points={points} fill="none" stroke="#57c7bd" strokeWidth="1.100" />
        <rect x="1753" y="91" width="69" height="62" fill="none" stroke="#ffff00" strokeWidth="2" strokeDasharray="8 3" />
        <text
          x="1831"
          y="129"
          fill="#ffff00"
          className="font-['Inter','Noto_Sans_CJK_SC',sans-serif] text-[43px] font-medium"
        >
          Coinbase BTC溢价为负
        </text>
      </svg>
      <div className="flex w-[78px] shrink-0 flex-col justify-between border-l border-[#1f1f26] pt-[38px] pb-[14px] text-center text-xs leading-4 text-[#686b80]">
        <span className="pr-[2px]">0.001000</span>
        <span className="bg-[#ff4b4f] pr-[2px] leading-[19px] font-medium text-white">0.000000</span>
        <span className="pr-[2px]">-0.001000</span>
        <span className="pr-[2px]">-0.002000</span>
      </div>
      <div className="absolute top-[1px] left-[11px] flex items-center gap-[6px] text-xs leading-4 text-[#6f7184]">
        <CircleButton label="收起副图" />
        <span>Coinbase BTC溢价指数</span>
        <span className="text-[#57c7bd]">收:-0.000936</span>
      </div>
    </div>
  )
}

export default function App() {
  return (
    <div className={`flex min-h-screen flex-col border-t border-l border-[#3c3c3c] bg-[#111] ${UI_FONT}`}>
      <TitleBar />
      <div className="flex flex-1 gap-1 bg-[#2a2a2a] pt-1 pr-[2px]">
        <Sidebar />
        <main className="flex min-w-0 flex-1 flex-col overflow-hidden rounded-t-lg bg-[#111]">
          <SymbolTabs />
          <PeriodBar />
          <DrawBar />
          <section className={`flex flex-1 flex-col border-t border-[#2e2e2e] ${NUM_FONT}`}>
            <PricePane />
            <PremiumPane />
            <div className="flex h-[25px] items-center border-t border-[#1f1f26] pl-[91px] text-xs leading-4 text-[#686b80]">
              <div className="flex min-w-0 flex-1 justify-between">
                {DATES.map(d => (
                  <span key={d} className="w-16 text-center">
                    {d}
                  </span>
                ))}
              </div>
              <div className="flex w-[59px] justify-end gap-2 pr-[6px] text-[13px]">
                <button type="button" className="font-bold text-white">筹</button>
                <button type="button" className="text-[#999]">爆</button>
              </div>
            </div>
          </section>
          <div className="h-[3px] border-t border-[#3a3a3a]" />
        </main>
      </div>
    </div>
  )
}
